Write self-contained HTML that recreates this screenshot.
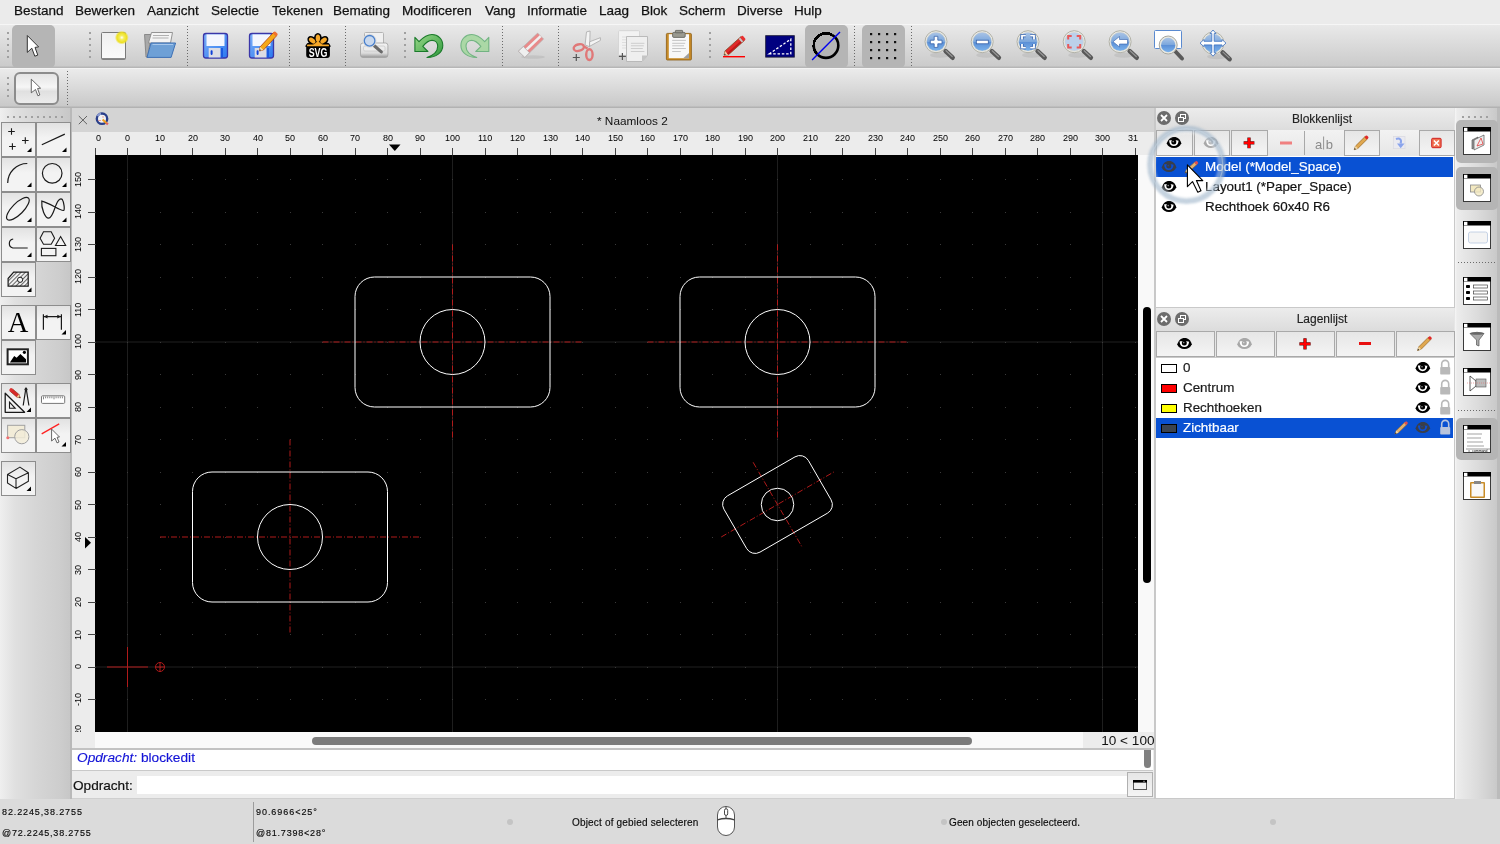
<!DOCTYPE html><html><head><meta charset="utf-8"><style>
*{margin:0;padding:0;box-sizing:border-box}
html,body{width:1500px;height:844px;overflow:hidden;background:#ececec;font-family:"Liberation Sans",sans-serif;color:#1b1b1b;position:relative}
.a{position:absolute}
div,span,svg{will-change:transform}
svg{position:absolute;overflow:visible}
.menu{left:0;top:0;width:1500px;height:24px;background:#ebebeb}
.menu span{position:absolute;top:3px;font-size:13.5px;line-height:16px;color:#111;-webkit-text-stroke:0.25px #111}
.tb1{left:0;top:24px;width:1500px;height:44px;background:linear-gradient(#f6f6f6 0,#f6f6f6 1px,#e9e9e9 1px,#cbcbcb 42px,#b6b6b6 43px,#b6b6b6 44px)}
.tb2{left:0;top:68px;width:1500px;height:40px;background:linear-gradient(#f3f3f3 0,#f3f3f3 1px,#ebebeb 1px,#c9c9c9 38px,#b2b2b2 39px,#b2b2b2 40px)}
.handle{position:absolute;width:2px;background:radial-gradient(circle,#a0a0a0 0.9px,transparent 1.2px) 0 0/2px 6px}
.hhandle{position:absolute;height:2px;background:radial-gradient(circle,#a0a0a0 0.9px,transparent 1.2px) 0 0/6px 2px}
.vsep{position:absolute;width:1px;background:linear-gradient(#6a6a6a 50%,transparent 50%) 0 0/1px 3px}
.hsep{position:absolute;height:1px;background:linear-gradient(90deg,#6a6a6a 50%,transparent 50%) 0 0/3px 1px}
.act{position:absolute;background:#b5b5b5;border-radius:5px}
.ltb{left:0;top:108px;width:72px;height:691px;background:linear-gradient(90deg,#efefef 0,#e0e0e0 15px,#d6d6d6 35px,#cdcdcd 60px,#c7c7c7 70px,#b9b9b9 70px,#b9b9b9 72px)}
.lbtn{position:absolute;width:35px;height:35px;border:1px solid #8d8d8d;background:linear-gradient(#e2e2e2,#f3f3f3 45%,#f3f3f3)}
.rtb{left:1455px;top:108px;width:45px;height:691px;background:linear-gradient(90deg,#f6f6f6 0,#ececec 2px,#dcdcdc 22px,#c9c9c9 42px,#bbbbbb 42px,#bbbbbb 45px)}
.status{left:0;top:799px;width:1500px;height:45px;background:#dbdbdb}
.st{position:absolute;font-size:10px;letter-spacing:0.3px;color:#0a0a0a;-webkit-text-stroke:0.15px #0a0a0a;line-height:12px;white-space:nowrap}
.mdi{left:72px;top:108px;width:1083px;height:691px;background:#ececec;border-bottom:1px solid #cfcfcf}
.tabbar{left:72px;top:108px;width:1083px;height:24px;background:#d4d4d4}
.ruler{background:#ececec}
.rl{position:absolute;font-size:9px;line-height:10px;color:#000;white-space:nowrap}
.canvas{left:95px;top:155px;width:1043px;height:577px;background:#000;overflow:hidden}
.dock{left:1155px;top:108px;width:300px;height:691px;background:#e6e6e6}
.dtitle{position:absolute;height:23px;background:linear-gradient(#ececec,#dcdcdc)}
.dtitle span{position:absolute;left:34px;right:0;text-align:center;top:4px;font-size:12px;color:#222;-webkit-text-stroke:0.15px #222}
.cbtn{position:absolute;width:14px;height:14px;border-radius:50%;background:#6c6c6c}
.dbtn{position:absolute;border:1px solid #a9a9a9;background:linear-gradient(#e6e6e6,#f4f4f4)}
.list{position:absolute;background:#fff;border:1px solid #c9c9c9}
.row{position:absolute;left:0;right:0;height:20px;font-size:13.4px;line-height:20px;color:#111;white-space:nowrap;-webkit-text-stroke:0.2px currentColor}
.sel{background:#0951d3;color:#fff}
</style></head><body><div class="a menu"><span style="left:14px">Bestand</span><span style="left:75.3px">Bewerken</span><span style="left:146.7px">Aanzicht</span><span style="left:211.3px">Selectie</span><span style="left:271.7px">Tekenen</span><span style="left:333px">Bemating</span><span style="left:402.3px">Modificeren</span><span style="left:485px">Vang</span><span style="left:526.7px">Informatie</span><span style="left:599px">Laag</span><span style="left:641px">Blok</span><span style="left:679.3px">Scherm</span><span style="left:737.3px">Diverse</span><span style="left:794px">Hulp</span></div><div class="a tb1"></div><div class="a tb2"></div><div class="handle" style="left:7px;top:30px;height:30px"></div><div class="handle" style="left:89px;top:30px;height:30px"></div><div class="handle" style="left:404px;top:30px;height:30px"></div><div class="handle" style="left:709px;top:30px;height:30px"></div><div class="vsep" style="left:187px;top:26px;height:40px"></div><div class="vsep" style="left:289px;top:26px;height:40px"></div><div class="vsep" style="left:345px;top:26px;height:40px"></div><div class="vsep" style="left:502px;top:26px;height:40px"></div><div class="vsep" style="left:558px;top:26px;height:40px"></div><div class="vsep" style="left:854px;top:26px;height:40px"></div><div class="vsep" style="left:911px;top:26px;height:40px"></div><div class="act" style="left:12px;top:25px;width:43px;height:43px"></div><div class="act" style="left:805px;top:25px;width:43px;height:43px"></div><div class="act" style="left:862px;top:25px;width:43px;height:43px"></div><div class="handle" style="left:7px;top:75px;height:24px"></div><div class="vsep" style="left:67px;top:71px;height:34px"></div><div class="a" style="left:14px;top:72px;width:45px;height:33px;border:2px solid #8c8c8c;border-radius:6px;background:linear-gradient(#e4e4e4,#f6f6f6 45%,#e0e0e0 60%,#ececec)"></div><div class="a ltb"></div><div class="hhandle" style="left:5px;top:116px;width:60px"></div><div class="lbtn" style="left:1px;top:122px"></div><div class="lbtn" style="left:36px;top:122px"></div><div class="lbtn" style="left:1px;top:157px"></div><div class="lbtn" style="left:36px;top:157px"></div><div class="lbtn" style="left:1px;top:192px"></div><div class="lbtn" style="left:36px;top:192px"></div><div class="lbtn" style="left:1px;top:227px"></div><div class="lbtn" style="left:36px;top:227px"></div><div class="lbtn" style="left:1px;top:262px"></div><div class="lbtn" style="left:1px;top:305px"></div><div class="lbtn" style="left:36px;top:305px"></div><div class="lbtn" style="left:1px;top:340px"></div><div class="lbtn" style="left:1px;top:383px"></div><div class="lbtn" style="left:36px;top:383px"></div><div class="lbtn" style="left:1px;top:418px"></div><div class="lbtn" style="left:36px;top:418px"></div><div class="lbtn" style="left:1px;top:461px"></div><div class="a mdi"></div><div class="a tabbar"></div><div class="a" style="left:597px;top:113.5px;font-size:11.8px;color:#111;white-space:nowrap">* Naamloos 2</div><svg style="left:78px;top:115px" width="11" height="11"><path d="M0.8 1L9 9.2M9 1L0.8 9.2" stroke="#555" stroke-width="0.9"/></svg><div class="a ruler" style="left:72px;top:132px;width:1083px;height:23px"></div><div class="a ruler" style="left:72px;top:132px;width:23px;height:616px"></div><svg style="left:0;top:0" width="1500" height="844"><line x1="95.5" y1="148" x2="95.5" y2="155" stroke="#444" stroke-width="1"/><line x1="127.5" y1="148" x2="127.5" y2="155" stroke="#444" stroke-width="1"/><line x1="160.5" y1="148" x2="160.5" y2="155" stroke="#444" stroke-width="1"/><line x1="192.5" y1="148" x2="192.5" y2="155" stroke="#444" stroke-width="1"/><line x1="225.5" y1="148" x2="225.5" y2="155" stroke="#444" stroke-width="1"/><line x1="257.5" y1="148" x2="257.5" y2="155" stroke="#444" stroke-width="1"/><line x1="290.5" y1="148" x2="290.5" y2="155" stroke="#444" stroke-width="1"/><line x1="322.5" y1="148" x2="322.5" y2="155" stroke="#444" stroke-width="1"/><line x1="355.5" y1="148" x2="355.5" y2="155" stroke="#444" stroke-width="1"/><line x1="387.5" y1="148" x2="387.5" y2="155" stroke="#444" stroke-width="1"/><line x1="420.5" y1="148" x2="420.5" y2="155" stroke="#444" stroke-width="1"/><line x1="452.5" y1="148" x2="452.5" y2="155" stroke="#444" stroke-width="1"/><line x1="485.5" y1="148" x2="485.5" y2="155" stroke="#444" stroke-width="1"/><line x1="517.5" y1="148" x2="517.5" y2="155" stroke="#444" stroke-width="1"/><line x1="550.5" y1="148" x2="550.5" y2="155" stroke="#444" stroke-width="1"/><line x1="582.5" y1="148" x2="582.5" y2="155" stroke="#444" stroke-width="1"/><line x1="615.5" y1="148" x2="615.5" y2="155" stroke="#444" stroke-width="1"/><line x1="647.5" y1="148" x2="647.5" y2="155" stroke="#444" stroke-width="1"/><line x1="680.5" y1="148" x2="680.5" y2="155" stroke="#444" stroke-width="1"/><line x1="712.5" y1="148" x2="712.5" y2="155" stroke="#444" stroke-width="1"/><line x1="745.5" y1="148" x2="745.5" y2="155" stroke="#444" stroke-width="1"/><line x1="777.5" y1="148" x2="777.5" y2="155" stroke="#444" stroke-width="1"/><line x1="810.5" y1="148" x2="810.5" y2="155" stroke="#444" stroke-width="1"/><line x1="842.5" y1="148" x2="842.5" y2="155" stroke="#444" stroke-width="1"/><line x1="875.5" y1="148" x2="875.5" y2="155" stroke="#444" stroke-width="1"/><line x1="907.5" y1="148" x2="907.5" y2="155" stroke="#444" stroke-width="1"/><line x1="940.5" y1="148" x2="940.5" y2="155" stroke="#444" stroke-width="1"/><line x1="972.5" y1="148" x2="972.5" y2="155" stroke="#444" stroke-width="1"/><line x1="1005.5" y1="148" x2="1005.5" y2="155" stroke="#444" stroke-width="1"/><line x1="1037.5" y1="148" x2="1037.5" y2="155" stroke="#444" stroke-width="1"/><line x1="1070.5" y1="148" x2="1070.5" y2="155" stroke="#444" stroke-width="1"/><line x1="1102.5" y1="148" x2="1102.5" y2="155" stroke="#444" stroke-width="1"/><line x1="1135.5" y1="148" x2="1135.5" y2="155" stroke="#444" stroke-width="1"/><line x1="88" y1="699.5" x2="95" y2="699.5" stroke="#444" stroke-width="1"/><line x1="88" y1="667.5" x2="95" y2="667.5" stroke="#444" stroke-width="1"/><line x1="88" y1="634.5" x2="95" y2="634.5" stroke="#444" stroke-width="1"/><line x1="88" y1="602.5" x2="95" y2="602.5" stroke="#444" stroke-width="1"/><line x1="88" y1="569.5" x2="95" y2="569.5" stroke="#444" stroke-width="1"/><line x1="88" y1="537.5" x2="95" y2="537.5" stroke="#444" stroke-width="1"/><line x1="88" y1="504.5" x2="95" y2="504.5" stroke="#444" stroke-width="1"/><line x1="88" y1="472.5" x2="95" y2="472.5" stroke="#444" stroke-width="1"/><line x1="88" y1="439.5" x2="95" y2="439.5" stroke="#444" stroke-width="1"/><line x1="88" y1="407.5" x2="95" y2="407.5" stroke="#444" stroke-width="1"/><line x1="88" y1="374.5" x2="95" y2="374.5" stroke="#444" stroke-width="1"/><line x1="88" y1="342.5" x2="95" y2="342.5" stroke="#444" stroke-width="1"/><line x1="88" y1="309.5" x2="95" y2="309.5" stroke="#444" stroke-width="1"/><line x1="88" y1="277.5" x2="95" y2="277.5" stroke="#444" stroke-width="1"/><line x1="88" y1="244.5" x2="95" y2="244.5" stroke="#444" stroke-width="1"/><line x1="88" y1="212.5" x2="95" y2="212.5" stroke="#444" stroke-width="1"/><line x1="88" y1="179.5" x2="95" y2="179.5" stroke="#444" stroke-width="1"/><path d="M389 144.5L400.5 144.5L394.8 151Z" fill="#000"/><path d="M85 537L91 542.7L85 548.4Z" fill="#000"/></svg><div class="a" style="left:95px;top:132px;width:1043px;height:23px;overflow:hidden"><div class="rl" style="left:1px;top:0.6px">0</div><div class="rl" style="left:30.0px;top:0.6px">0</div><div class="rl" style="left:60.0px;top:0.6px">10</div><div class="rl" style="left:92.5px;top:0.6px">20</div><div class="rl" style="left:125.0px;top:0.6px">30</div><div class="rl" style="left:157.5px;top:0.6px">40</div><div class="rl" style="left:190.0px;top:0.6px">50</div><div class="rl" style="left:222.5px;top:0.6px">60</div><div class="rl" style="left:255.0px;top:0.6px">70</div><div class="rl" style="left:287.5px;top:0.6px">80</div><div class="rl" style="left:320.0px;top:0.6px">90</div><div class="rl" style="left:350.0px;top:0.6px">100</div><div class="rl" style="left:382.5px;top:0.6px">110</div><div class="rl" style="left:415.0px;top:0.6px">120</div><div class="rl" style="left:447.5px;top:0.6px">130</div><div class="rl" style="left:480.0px;top:0.6px">140</div><div class="rl" style="left:512.5px;top:0.6px">150</div><div class="rl" style="left:545.0px;top:0.6px">160</div><div class="rl" style="left:577.5px;top:0.6px">170</div><div class="rl" style="left:610.0px;top:0.6px">180</div><div class="rl" style="left:642.5px;top:0.6px">190</div><div class="rl" style="left:675.0px;top:0.6px">200</div><div class="rl" style="left:707.5px;top:0.6px">210</div><div class="rl" style="left:740.0px;top:0.6px">220</div><div class="rl" style="left:772.5px;top:0.6px">230</div><div class="rl" style="left:805.0px;top:0.6px">240</div><div class="rl" style="left:837.5px;top:0.6px">250</div><div class="rl" style="left:870.0px;top:0.6px">260</div><div class="rl" style="left:902.5px;top:0.6px">270</div><div class="rl" style="left:935.0px;top:0.6px">280</div><div class="rl" style="left:967.5px;top:0.6px">290</div><div class="rl" style="left:1000.0px;top:0.6px">300</div><div class="rl" style="left:1032.5px;top:0.6px">310</div></div><div class="a" style="left:72px;top:155px;width:23px;height:577px;overflow:hidden"><div class="rl" style="left:1.0px;top:572.2px;width:10px;height:10px;transform:rotate(-90deg)"><span style="position:absolute;left:-1.5px;top:0">-20</span></div><div class="rl" style="left:1.0px;top:539.7px;width:10px;height:10px;transform:rotate(-90deg)"><span style="position:absolute;left:-1.5px;top:0">-10</span></div><div class="rl" style="left:1.0px;top:507.2px;width:10px;height:10px;transform:rotate(-90deg)"><span style="position:absolute;left:2.5px;top:0">0</span></div><div class="rl" style="left:1.0px;top:474.7px;width:10px;height:10px;transform:rotate(-90deg)"><span style="position:absolute;left:0.0px;top:0">10</span></div><div class="rl" style="left:1.0px;top:442.2px;width:10px;height:10px;transform:rotate(-90deg)"><span style="position:absolute;left:0.0px;top:0">20</span></div><div class="rl" style="left:1.0px;top:409.7px;width:10px;height:10px;transform:rotate(-90deg)"><span style="position:absolute;left:0.0px;top:0">30</span></div><div class="rl" style="left:1.0px;top:377.2px;width:10px;height:10px;transform:rotate(-90deg)"><span style="position:absolute;left:0.0px;top:0">40</span></div><div class="rl" style="left:1.0px;top:344.7px;width:10px;height:10px;transform:rotate(-90deg)"><span style="position:absolute;left:0.0px;top:0">50</span></div><div class="rl" style="left:1.0px;top:312.2px;width:10px;height:10px;transform:rotate(-90deg)"><span style="position:absolute;left:0.0px;top:0">60</span></div><div class="rl" style="left:1.0px;top:279.7px;width:10px;height:10px;transform:rotate(-90deg)"><span style="position:absolute;left:0.0px;top:0">70</span></div><div class="rl" style="left:1.0px;top:247.2px;width:10px;height:10px;transform:rotate(-90deg)"><span style="position:absolute;left:0.0px;top:0">80</span></div><div class="rl" style="left:1.0px;top:214.7px;width:10px;height:10px;transform:rotate(-90deg)"><span style="position:absolute;left:0.0px;top:0">90</span></div><div class="rl" style="left:1.0px;top:182.2px;width:10px;height:10px;transform:rotate(-90deg)"><span style="position:absolute;left:-2.5px;top:0">100</span></div><div class="rl" style="left:1.0px;top:149.7px;width:10px;height:10px;transform:rotate(-90deg)"><span style="position:absolute;left:-2.5px;top:0">110</span></div><div class="rl" style="left:1.0px;top:117.2px;width:10px;height:10px;transform:rotate(-90deg)"><span style="position:absolute;left:-2.5px;top:0">120</span></div><div class="rl" style="left:1.0px;top:84.7px;width:10px;height:10px;transform:rotate(-90deg)"><span style="position:absolute;left:-2.5px;top:0">130</span></div><div class="rl" style="left:1.0px;top:52.2px;width:10px;height:10px;transform:rotate(-90deg)"><span style="position:absolute;left:-2.5px;top:0">140</span></div><div class="rl" style="left:1.0px;top:19.7px;width:10px;height:10px;transform:rotate(-90deg)"><span style="position:absolute;left:-2.5px;top:0">150</span></div></div><div class="a canvas"><svg style="left:-95px;top:-155px" width="1500" height="844"><line x1="127.5" y1="155" x2="127.5" y2="732" stroke="#1e1e1e" stroke-width="1"/><line x1="452.5" y1="155" x2="452.5" y2="732" stroke="#1e1e1e" stroke-width="1"/><line x1="777.5" y1="155" x2="777.5" y2="732" stroke="#1e1e1e" stroke-width="1"/><line x1="1102.5" y1="155" x2="1102.5" y2="732" stroke="#1e1e1e" stroke-width="1"/><line x1="95" y1="667.0" x2="1138" y2="667.0" stroke="#212121" stroke-width="1"/><line x1="95" y1="342.0" x2="1138" y2="342.0" stroke="#212121" stroke-width="1"/><path d="M95 732h1v1h-1zM95 699h1v1h-1zM95 667h1v1h-1zM95 634h1v1h-1zM95 602h1v1h-1zM95 569h1v1h-1zM95 537h1v1h-1zM95 504h1v1h-1zM95 472h1v1h-1zM95 439h1v1h-1zM95 407h1v1h-1zM95 374h1v1h-1zM95 342h1v1h-1zM95 309h1v1h-1zM95 277h1v1h-1zM95 244h1v1h-1zM95 212h1v1h-1zM95 179h1v1h-1zM127 732h1v1h-1zM127 699h1v1h-1zM127 667h1v1h-1zM127 634h1v1h-1zM127 602h1v1h-1zM127 569h1v1h-1zM127 537h1v1h-1zM127 504h1v1h-1zM127 472h1v1h-1zM127 439h1v1h-1zM127 407h1v1h-1zM127 374h1v1h-1zM127 342h1v1h-1zM127 309h1v1h-1zM127 277h1v1h-1zM127 244h1v1h-1zM127 212h1v1h-1zM127 179h1v1h-1zM160 732h1v1h-1zM160 699h1v1h-1zM160 667h1v1h-1zM160 634h1v1h-1zM160 602h1v1h-1zM160 569h1v1h-1zM160 537h1v1h-1zM160 504h1v1h-1zM160 472h1v1h-1zM160 439h1v1h-1zM160 407h1v1h-1zM160 374h1v1h-1zM160 342h1v1h-1zM160 309h1v1h-1zM160 277h1v1h-1zM160 244h1v1h-1zM160 212h1v1h-1zM160 179h1v1h-1zM192 732h1v1h-1zM192 699h1v1h-1zM192 667h1v1h-1zM192 634h1v1h-1zM192 602h1v1h-1zM192 569h1v1h-1zM192 537h1v1h-1zM192 504h1v1h-1zM192 472h1v1h-1zM192 439h1v1h-1zM192 407h1v1h-1zM192 374h1v1h-1zM192 342h1v1h-1zM192 309h1v1h-1zM192 277h1v1h-1zM192 244h1v1h-1zM192 212h1v1h-1zM192 179h1v1h-1zM225 732h1v1h-1zM225 699h1v1h-1zM225 667h1v1h-1zM225 634h1v1h-1zM225 602h1v1h-1zM225 569h1v1h-1zM225 537h1v1h-1zM225 504h1v1h-1zM225 472h1v1h-1zM225 439h1v1h-1zM225 407h1v1h-1zM225 374h1v1h-1zM225 342h1v1h-1zM225 309h1v1h-1zM225 277h1v1h-1zM225 244h1v1h-1zM225 212h1v1h-1zM225 179h1v1h-1zM257 732h1v1h-1zM257 699h1v1h-1zM257 667h1v1h-1zM257 634h1v1h-1zM257 602h1v1h-1zM257 569h1v1h-1zM257 537h1v1h-1zM257 504h1v1h-1zM257 472h1v1h-1zM257 439h1v1h-1zM257 407h1v1h-1zM257 374h1v1h-1zM257 342h1v1h-1zM257 309h1v1h-1zM257 277h1v1h-1zM257 244h1v1h-1zM257 212h1v1h-1zM257 179h1v1h-1zM290 732h1v1h-1zM290 699h1v1h-1zM290 667h1v1h-1zM290 634h1v1h-1zM290 602h1v1h-1zM290 569h1v1h-1zM290 537h1v1h-1zM290 504h1v1h-1zM290 472h1v1h-1zM290 439h1v1h-1zM290 407h1v1h-1zM290 374h1v1h-1zM290 342h1v1h-1zM290 309h1v1h-1zM290 277h1v1h-1zM290 244h1v1h-1zM290 212h1v1h-1zM290 179h1v1h-1zM322 732h1v1h-1zM322 699h1v1h-1zM322 667h1v1h-1zM322 634h1v1h-1zM322 602h1v1h-1zM322 569h1v1h-1zM322 537h1v1h-1zM322 504h1v1h-1zM322 472h1v1h-1zM322 439h1v1h-1zM322 407h1v1h-1zM322 374h1v1h-1zM322 342h1v1h-1zM322 309h1v1h-1zM322 277h1v1h-1zM322 244h1v1h-1zM322 212h1v1h-1zM322 179h1v1h-1zM355 732h1v1h-1zM355 699h1v1h-1zM355 667h1v1h-1zM355 634h1v1h-1zM355 602h1v1h-1zM355 569h1v1h-1zM355 537h1v1h-1zM355 504h1v1h-1zM355 472h1v1h-1zM355 439h1v1h-1zM355 407h1v1h-1zM355 374h1v1h-1zM355 342h1v1h-1zM355 309h1v1h-1zM355 277h1v1h-1zM355 244h1v1h-1zM355 212h1v1h-1zM355 179h1v1h-1zM387 732h1v1h-1zM387 699h1v1h-1zM387 667h1v1h-1zM387 634h1v1h-1zM387 602h1v1h-1zM387 569h1v1h-1zM387 537h1v1h-1zM387 504h1v1h-1zM387 472h1v1h-1zM387 439h1v1h-1zM387 407h1v1h-1zM387 374h1v1h-1zM387 342h1v1h-1zM387 309h1v1h-1zM387 277h1v1h-1zM387 244h1v1h-1zM387 212h1v1h-1zM387 179h1v1h-1zM420 732h1v1h-1zM420 699h1v1h-1zM420 667h1v1h-1zM420 634h1v1h-1zM420 602h1v1h-1zM420 569h1v1h-1zM420 537h1v1h-1zM420 504h1v1h-1zM420 472h1v1h-1zM420 439h1v1h-1zM420 407h1v1h-1zM420 374h1v1h-1zM420 342h1v1h-1zM420 309h1v1h-1zM420 277h1v1h-1zM420 244h1v1h-1zM420 212h1v1h-1zM420 179h1v1h-1zM452 732h1v1h-1zM452 699h1v1h-1zM452 667h1v1h-1zM452 634h1v1h-1zM452 602h1v1h-1zM452 569h1v1h-1zM452 537h1v1h-1zM452 504h1v1h-1zM452 472h1v1h-1zM452 439h1v1h-1zM452 407h1v1h-1zM452 374h1v1h-1zM452 342h1v1h-1zM452 309h1v1h-1zM452 277h1v1h-1zM452 244h1v1h-1zM452 212h1v1h-1zM452 179h1v1h-1zM485 732h1v1h-1zM485 699h1v1h-1zM485 667h1v1h-1zM485 634h1v1h-1zM485 602h1v1h-1zM485 569h1v1h-1zM485 537h1v1h-1zM485 504h1v1h-1zM485 472h1v1h-1zM485 439h1v1h-1zM485 407h1v1h-1zM485 374h1v1h-1zM485 342h1v1h-1zM485 309h1v1h-1zM485 277h1v1h-1zM485 244h1v1h-1zM485 212h1v1h-1zM485 179h1v1h-1zM517 732h1v1h-1zM517 699h1v1h-1zM517 667h1v1h-1zM517 634h1v1h-1zM517 602h1v1h-1zM517 569h1v1h-1zM517 537h1v1h-1zM517 504h1v1h-1zM517 472h1v1h-1zM517 439h1v1h-1zM517 407h1v1h-1zM517 374h1v1h-1zM517 342h1v1h-1zM517 309h1v1h-1zM517 277h1v1h-1zM517 244h1v1h-1zM517 212h1v1h-1zM517 179h1v1h-1zM550 732h1v1h-1zM550 699h1v1h-1zM550 667h1v1h-1zM550 634h1v1h-1zM550 602h1v1h-1zM550 569h1v1h-1zM550 537h1v1h-1zM550 504h1v1h-1zM550 472h1v1h-1zM550 439h1v1h-1zM550 407h1v1h-1zM550 374h1v1h-1zM550 342h1v1h-1zM550 309h1v1h-1zM550 277h1v1h-1zM550 244h1v1h-1zM550 212h1v1h-1zM550 179h1v1h-1zM582 732h1v1h-1zM582 699h1v1h-1zM582 667h1v1h-1zM582 634h1v1h-1zM582 602h1v1h-1zM582 569h1v1h-1zM582 537h1v1h-1zM582 504h1v1h-1zM582 472h1v1h-1zM582 439h1v1h-1zM582 407h1v1h-1zM582 374h1v1h-1zM582 342h1v1h-1zM582 309h1v1h-1zM582 277h1v1h-1zM582 244h1v1h-1zM582 212h1v1h-1zM582 179h1v1h-1zM615 732h1v1h-1zM615 699h1v1h-1zM615 667h1v1h-1zM615 634h1v1h-1zM615 602h1v1h-1zM615 569h1v1h-1zM615 537h1v1h-1zM615 504h1v1h-1zM615 472h1v1h-1zM615 439h1v1h-1zM615 407h1v1h-1zM615 374h1v1h-1zM615 342h1v1h-1zM615 309h1v1h-1zM615 277h1v1h-1zM615 244h1v1h-1zM615 212h1v1h-1zM615 179h1v1h-1zM647 732h1v1h-1zM647 699h1v1h-1zM647 667h1v1h-1zM647 634h1v1h-1zM647 602h1v1h-1zM647 569h1v1h-1zM647 537h1v1h-1zM647 504h1v1h-1zM647 472h1v1h-1zM647 439h1v1h-1zM647 407h1v1h-1zM647 374h1v1h-1zM647 342h1v1h-1zM647 309h1v1h-1zM647 277h1v1h-1zM647 244h1v1h-1zM647 212h1v1h-1zM647 179h1v1h-1zM680 732h1v1h-1zM680 699h1v1h-1zM680 667h1v1h-1zM680 634h1v1h-1zM680 602h1v1h-1zM680 569h1v1h-1zM680 537h1v1h-1zM680 504h1v1h-1zM680 472h1v1h-1zM680 439h1v1h-1zM680 407h1v1h-1zM680 374h1v1h-1zM680 342h1v1h-1zM680 309h1v1h-1zM680 277h1v1h-1zM680 244h1v1h-1zM680 212h1v1h-1zM680 179h1v1h-1zM712 732h1v1h-1zM712 699h1v1h-1zM712 667h1v1h-1zM712 634h1v1h-1zM712 602h1v1h-1zM712 569h1v1h-1zM712 537h1v1h-1zM712 504h1v1h-1zM712 472h1v1h-1zM712 439h1v1h-1zM712 407h1v1h-1zM712 374h1v1h-1zM712 342h1v1h-1zM712 309h1v1h-1zM712 277h1v1h-1zM712 244h1v1h-1zM712 212h1v1h-1zM712 179h1v1h-1zM745 732h1v1h-1zM745 699h1v1h-1zM745 667h1v1h-1zM745 634h1v1h-1zM745 602h1v1h-1zM745 569h1v1h-1zM745 537h1v1h-1zM745 504h1v1h-1zM745 472h1v1h-1zM745 439h1v1h-1zM745 407h1v1h-1zM745 374h1v1h-1zM745 342h1v1h-1zM745 309h1v1h-1zM745 277h1v1h-1zM745 244h1v1h-1zM745 212h1v1h-1zM745 179h1v1h-1zM777 732h1v1h-1zM777 699h1v1h-1zM777 667h1v1h-1zM777 634h1v1h-1zM777 602h1v1h-1zM777 569h1v1h-1zM777 537h1v1h-1zM777 504h1v1h-1zM777 472h1v1h-1zM777 439h1v1h-1zM777 407h1v1h-1zM777 374h1v1h-1zM777 342h1v1h-1zM777 309h1v1h-1zM777 277h1v1h-1zM777 244h1v1h-1zM777 212h1v1h-1zM777 179h1v1h-1zM810 732h1v1h-1zM810 699h1v1h-1zM810 667h1v1h-1zM810 634h1v1h-1zM810 602h1v1h-1zM810 569h1v1h-1zM810 537h1v1h-1zM810 504h1v1h-1zM810 472h1v1h-1zM810 439h1v1h-1zM810 407h1v1h-1zM810 374h1v1h-1zM810 342h1v1h-1zM810 309h1v1h-1zM810 277h1v1h-1zM810 244h1v1h-1zM810 212h1v1h-1zM810 179h1v1h-1zM842 732h1v1h-1zM842 699h1v1h-1zM842 667h1v1h-1zM842 634h1v1h-1zM842 602h1v1h-1zM842 569h1v1h-1zM842 537h1v1h-1zM842 504h1v1h-1zM842 472h1v1h-1zM842 439h1v1h-1zM842 407h1v1h-1zM842 374h1v1h-1zM842 342h1v1h-1zM842 309h1v1h-1zM842 277h1v1h-1zM842 244h1v1h-1zM842 212h1v1h-1zM842 179h1v1h-1zM875 732h1v1h-1zM875 699h1v1h-1zM875 667h1v1h-1zM875 634h1v1h-1zM875 602h1v1h-1zM875 569h1v1h-1zM875 537h1v1h-1zM875 504h1v1h-1zM875 472h1v1h-1zM875 439h1v1h-1zM875 407h1v1h-1zM875 374h1v1h-1zM875 342h1v1h-1zM875 309h1v1h-1zM875 277h1v1h-1zM875 244h1v1h-1zM875 212h1v1h-1zM875 179h1v1h-1zM907 732h1v1h-1zM907 699h1v1h-1zM907 667h1v1h-1zM907 634h1v1h-1zM907 602h1v1h-1zM907 569h1v1h-1zM907 537h1v1h-1zM907 504h1v1h-1zM907 472h1v1h-1zM907 439h1v1h-1zM907 407h1v1h-1zM907 374h1v1h-1zM907 342h1v1h-1zM907 309h1v1h-1zM907 277h1v1h-1zM907 244h1v1h-1zM907 212h1v1h-1zM907 179h1v1h-1zM940 732h1v1h-1zM940 699h1v1h-1zM940 667h1v1h-1zM940 634h1v1h-1zM940 602h1v1h-1zM940 569h1v1h-1zM940 537h1v1h-1zM940 504h1v1h-1zM940 472h1v1h-1zM940 439h1v1h-1zM940 407h1v1h-1zM940 374h1v1h-1zM940 342h1v1h-1zM940 309h1v1h-1zM940 277h1v1h-1zM940 244h1v1h-1zM940 212h1v1h-1zM940 179h1v1h-1zM972 732h1v1h-1zM972 699h1v1h-1zM972 667h1v1h-1zM972 634h1v1h-1zM972 602h1v1h-1zM972 569h1v1h-1zM972 537h1v1h-1zM972 504h1v1h-1zM972 472h1v1h-1zM972 439h1v1h-1zM972 407h1v1h-1zM972 374h1v1h-1zM972 342h1v1h-1zM972 309h1v1h-1zM972 277h1v1h-1zM972 244h1v1h-1zM972 212h1v1h-1zM972 179h1v1h-1zM1005 732h1v1h-1zM1005 699h1v1h-1zM1005 667h1v1h-1zM1005 634h1v1h-1zM1005 602h1v1h-1zM1005 569h1v1h-1zM1005 537h1v1h-1zM1005 504h1v1h-1zM1005 472h1v1h-1zM1005 439h1v1h-1zM1005 407h1v1h-1zM1005 374h1v1h-1zM1005 342h1v1h-1zM1005 309h1v1h-1zM1005 277h1v1h-1zM1005 244h1v1h-1zM1005 212h1v1h-1zM1005 179h1v1h-1zM1037 732h1v1h-1zM1037 699h1v1h-1zM1037 667h1v1h-1zM1037 634h1v1h-1zM1037 602h1v1h-1zM1037 569h1v1h-1zM1037 537h1v1h-1zM1037 504h1v1h-1zM1037 472h1v1h-1zM1037 439h1v1h-1zM1037 407h1v1h-1zM1037 374h1v1h-1zM1037 342h1v1h-1zM1037 309h1v1h-1zM1037 277h1v1h-1zM1037 244h1v1h-1zM1037 212h1v1h-1zM1037 179h1v1h-1zM1070 732h1v1h-1zM1070 699h1v1h-1zM1070 667h1v1h-1zM1070 634h1v1h-1zM1070 602h1v1h-1zM1070 569h1v1h-1zM1070 537h1v1h-1zM1070 504h1v1h-1zM1070 472h1v1h-1zM1070 439h1v1h-1zM1070 407h1v1h-1zM1070 374h1v1h-1zM1070 342h1v1h-1zM1070 309h1v1h-1zM1070 277h1v1h-1zM1070 244h1v1h-1zM1070 212h1v1h-1zM1070 179h1v1h-1zM1102 732h1v1h-1zM1102 699h1v1h-1zM1102 667h1v1h-1zM1102 634h1v1h-1zM1102 602h1v1h-1zM1102 569h1v1h-1zM1102 537h1v1h-1zM1102 504h1v1h-1zM1102 472h1v1h-1zM1102 439h1v1h-1zM1102 407h1v1h-1zM1102 374h1v1h-1zM1102 342h1v1h-1zM1102 309h1v1h-1zM1102 277h1v1h-1zM1102 244h1v1h-1zM1102 212h1v1h-1zM1102 179h1v1h-1zM1135 732h1v1h-1zM1135 699h1v1h-1zM1135 667h1v1h-1zM1135 634h1v1h-1zM1135 602h1v1h-1zM1135 569h1v1h-1zM1135 537h1v1h-1zM1135 504h1v1h-1zM1135 472h1v1h-1zM1135 439h1v1h-1zM1135 407h1v1h-1zM1135 374h1v1h-1zM1135 342h1v1h-1zM1135 309h1v1h-1zM1135 277h1v1h-1zM1135 244h1v1h-1zM1135 212h1v1h-1zM1135 179h1v1h-1z" fill="#3a3a3a"/><path d="M322.50 342.00L582.50 342.00M452.50 244.50L452.50 439.50" stroke="#b01a1a" stroke-width="1" stroke-dasharray="6 2 1 2" fill="none"/><path d="M647.50 342.00L907.50 342.00M777.50 244.50L777.50 439.50" stroke="#b01a1a" stroke-width="1" stroke-dasharray="6 2 1 2" fill="none"/><path d="M160.00 537.00L420.00 537.00M290.00 439.50L290.00 634.50" stroke="#b01a1a" stroke-width="1" stroke-dasharray="6 2 1 2" fill="none"/><path d="M721.21 537.00L833.79 472.00M753.12 462.28L801.88 546.72" stroke="#b01a1a" stroke-width="1" stroke-dasharray="6 2 1 2" fill="none"/><path d="M374.50 407.00L530.50 407.00A19.5 19.5 0 0 0 550.00 387.50L550.00 296.50A19.5 19.5 0 0 0 530.50 277.00L374.50 277.00A19.5 19.5 0 0 0 355.00 296.50L355.00 387.50A19.5 19.5 0 0 0 374.50 407.00Z" stroke="#fff" stroke-width="1" fill="none"/><circle cx="452.5" cy="342.0" r="32.5" stroke="#fff" stroke-width="1" fill="none"/><path d="M699.50 407.00L855.50 407.00A19.5 19.5 0 0 0 875.00 387.50L875.00 296.50A19.5 19.5 0 0 0 855.50 277.00L699.50 277.00A19.5 19.5 0 0 0 680.00 296.50L680.00 387.50A19.5 19.5 0 0 0 699.50 407.00Z" stroke="#fff" stroke-width="1" fill="none"/><circle cx="777.5" cy="342.0" r="32.5" stroke="#fff" stroke-width="1" fill="none"/><path d="M212.00 602.00L368.00 602.00A19.5 19.5 0 0 0 387.50 582.50L387.50 491.50A19.5 19.5 0 0 0 368.00 472.00L212.00 472.00A19.5 19.5 0 0 0 192.50 491.50L192.50 582.50A19.5 19.5 0 0 0 212.00 602.00Z" stroke="#fff" stroke-width="1" fill="none"/><circle cx="290.0" cy="537.0" r="32.5" stroke="#fff" stroke-width="1" fill="none"/><path d="M759.98 552.15L827.52 513.15A9.75 9.75 0 0 0 831.09 499.83L808.34 460.42A9.75 9.75 0 0 0 795.02 456.85L727.48 495.85A9.75 9.75 0 0 0 723.91 509.17L746.66 548.58A9.75 9.75 0 0 0 759.98 552.15Z" stroke="#fff" stroke-width="1" fill="none"/><circle cx="777.5" cy="504.5" r="16.25" stroke="#fff" stroke-width="1" fill="none"/><path d="M107 667H148M127.5 647V687" stroke="#b01a1a" stroke-width="1"/><circle cx="160" cy="667" r="4.5" stroke="#b01a1a" stroke-width="1" fill="none"/><path d="M160 662V672M155.5 667H164.5" stroke="#b01a1a" stroke-width="1"/></svg></div><div class="a" style="left:1138px;top:155px;width:17px;height:593px;background:#f9f9f9"></div><div class="a" style="left:1143px;top:307px;width:8px;height:276px;border-radius:4px;background:#000"></div><div class="a" style="left:95px;top:732px;width:988px;height:16px;background:#f9f9f9"></div><div class="a" style="left:312px;top:737px;width:660px;height:8px;border-radius:4px;background:#7b7b7b"></div><div class="a" style="left:1083px;top:732px;width:72px;height:16px;background:#ececec"></div><div class="a" style="left:1074px;top:732.5px;width:80.5px;text-align:right;font-size:13.6px;line-height:16px;color:#111;white-space:nowrap">10 &lt; 100</div><div class="a" style="left:72px;top:748px;width:1083px;height:50px;background:#ececec;border-top:2px solid #c2c2c2"></div><div class="a" style="left:72px;top:750px;width:1081px;height:21px;background:#fff;border-bottom:1px solid #c9c9c9"></div><div class="a" style="left:77px;top:750px;font-size:13.7px;line-height:16px;color:#1212d6;white-space:nowrap;-webkit-text-stroke:0.15px #1212d6"><i>Opdracht:</i> blockedit</div><div class="a" style="left:1144px;top:750px;width:7px;height:18px;border-radius:0 0 3.5px 3.5px;background:#808080"></div><div class="a" style="left:73px;top:778px;font-size:13.6px;line-height:16px;color:#111;white-space:nowrap;-webkit-text-stroke:0.2px #111">Opdracht:</div><div class="a" style="left:137px;top:776px;width:990px;height:18px;background:#fff"></div><div class="a" style="left:1127px;top:772px;width:26px;height:25px;border:1px solid #b0b0b0;background:linear-gradient(#e6e6e6,#f4f4f4)"></div><svg style="left:1133px;top:780px" width="14" height="10"><rect x="0.5" y="0.5" width="13" height="9" fill="#f0f0f0" stroke="#555"/><rect x="0" y="0" width="14" height="2.6" fill="#000"/><rect x="10.5" y="0.8" width="1" height="1" fill="#fff"/></svg><div class="a dock"></div><div class="a" style="left:1154px;top:108px;width:2px;height:691px;background:#c8c8c8"></div><div class="dtitle" style="left:1156px;top:108px;width:298px"><span>Blokkenlijst</span></div><div class="list" style="left:1155px;top:155px;width:300px;height:153px"></div><div class="dtitle" style="left:1156px;top:308px;width:298px"><span>Lagenlijst</span></div><div class="list" style="left:1155px;top:357px;width:300px;height:442px"></div><div class="cbtn" style="left:1157px;top:111px"></div><svg style="left:1160px;top:114px" width="8" height="8"><path d="M1 1L7 7M7 1L1 7" stroke="#fff" stroke-width="1.8"/></svg><div class="cbtn" style="left:1175px;top:111px"></div><svg style="left:1177px;top:113px" width="10" height="10"><rect x="3.5" y="1.5" width="5" height="4" fill="none" stroke="#fff" stroke-width="1"/><rect x="1.5" y="4.5" width="5" height="4" fill="#6c6c6c" stroke="#fff" stroke-width="1"/></svg><div class="cbtn" style="left:1157px;top:312px"></div><svg style="left:1160px;top:315px" width="8" height="8"><path d="M1 1L7 7M7 1L1 7" stroke="#fff" stroke-width="1.8"/></svg><div class="cbtn" style="left:1175px;top:312px"></div><svg style="left:1177px;top:314px" width="10" height="10"><rect x="3.5" y="1.5" width="5" height="4" fill="none" stroke="#fff" stroke-width="1"/><rect x="1.5" y="4.5" width="5" height="4" fill="#6c6c6c" stroke="#fff" stroke-width="1"/></svg><div class="dbtn" style="left:1156px;top:130px;width:37px;height:26px"></div><div class="dbtn" style="left:1194px;top:130px;width:36px;height:26px"></div><div class="dbtn" style="left:1231px;top:130px;width:37px;height:26px"></div><div class="a" style="left:1268px;top:130px;width:38px;height:26px;background:linear-gradient(#f2f2f2,#e6e6e6)"></div><div class="a" style="left:1305px;top:130px;width:39px;height:26px;background:linear-gradient(#f2f2f2,#e6e6e6)"></div><div class="dbtn" style="left:1344px;top:130px;width:36px;height:26px"></div><div class="a" style="left:1380px;top:130px;width:39px;height:26px;background:linear-gradient(#f2f2f2,#e6e6e6)"></div><div class="dbtn" style="left:1419px;top:130px;width:36px;height:26px"></div><div class="a" style="left:1304px;top:131px;width:1px;height:24px;background:#a8a8a8"></div><div class="dbtn" style="left:1156px;top:331px;width:59px;height:26px"></div><div class="dbtn" style="left:1216px;top:331px;width:59px;height:26px"></div><div class="dbtn" style="left:1276px;top:331px;width:59px;height:26px"></div><div class="dbtn" style="left:1336px;top:331px;width:59px;height:26px"></div><div class="dbtn" style="left:1396px;top:331px;width:59px;height:26px"></div><div class="row sel a" style="left:1156px;top:157px;width:297px"></div><div class="a row" style="left:1205px;top:157px;color:#fff">Model (*Model_Space)</div><div class="a row" style="left:1205px;top:177px">Layout1 (*Paper_Space)</div><div class="a row" style="left:1205px;top:197px">Rechthoek 60x40 R6</div><div class="row sel a" style="left:1156px;top:418px;width:297px"></div><div class="a" style="left:1161px;top:364px;width:16px;height:9px;background:#fff;border:1px solid #000"></div><div class="a row" style="left:1183px;top:358px;color:#1b1b1b">0</div><div class="a" style="left:1161px;top:384px;width:16px;height:9px;background:#f00;border:1px solid #000"></div><div class="a row" style="left:1183px;top:378px;color:#1b1b1b">Centrum</div><div class="a" style="left:1161px;top:404px;width:16px;height:9px;background:#ff0;border:1px solid #000"></div><div class="a row" style="left:1183px;top:398px;color:#1b1b1b">Rechthoeken</div><div class="a" style="left:1161px;top:424px;width:16px;height:9px;background:#3b4350;border:1px solid #000"></div><div class="a row" style="left:1183px;top:418px;color:#fff">Zichtbaar</div><div class="a rtb"></div><div class="hhandle" style="left:1460px;top:116px;width:30px"></div><div class="act" style="left:1456px;top:120px;width:42px;height:43px"></div><div class="act" style="left:1456px;top:167px;width:42px;height:43px"></div><div class="act" style="left:1456px;top:418px;width:42px;height:42px"></div><div class="hsep" style="left:1458px;top:262px;width:38px"></div><div class="hsep" style="left:1458px;top:410px;width:38px"></div><svg style="left:1463px;top:127px" width="28" height="28"><rect x="0.5" y="0.5" width="27" height="27" fill="#fff" stroke="#3a3a3a"/><rect x="0" y="0" width="28" height="4.5" fill="#000"/><rect x="1" y="0.8" width="3.4" height="3.4" fill="#fff"/></svg><svg style="left:1463px;top:174px" width="28" height="28"><rect x="0.5" y="0.5" width="27" height="27" fill="#fff" stroke="#3a3a3a"/><rect x="0" y="0" width="28" height="4.5" fill="#000"/><rect x="1" y="0.8" width="3.4" height="3.4" fill="#fff"/></svg><svg style="left:1463px;top:221px" width="28" height="28"><rect x="0.5" y="0.5" width="27" height="27" fill="#fff" stroke="#3a3a3a"/><rect x="0" y="0" width="28" height="4.5" fill="#000"/><rect x="1" y="0.8" width="3.4" height="3.4" fill="#fff"/></svg><svg style="left:1463px;top:277px" width="28" height="28"><rect x="0.5" y="0.5" width="27" height="27" fill="#fff" stroke="#3a3a3a"/><rect x="0" y="0" width="28" height="4.5" fill="#000"/><rect x="1" y="0.8" width="3.4" height="3.4" fill="#fff"/></svg><svg style="left:1463px;top:323px" width="28" height="28"><rect x="0.5" y="0.5" width="27" height="27" fill="#fff" stroke="#3a3a3a"/><rect x="0" y="0" width="28" height="4.5" fill="#000"/><rect x="1" y="0.8" width="3.4" height="3.4" fill="#fff"/></svg><svg style="left:1463px;top:368px" width="28" height="28"><rect x="0.5" y="0.5" width="27" height="27" fill="#fff" stroke="#3a3a3a"/><rect x="0" y="0" width="28" height="4.5" fill="#000"/><rect x="1" y="0.8" width="3.4" height="3.4" fill="#fff"/></svg><svg style="left:1463px;top:425px" width="28" height="28"><rect x="0.5" y="0.5" width="27" height="27" fill="#fff" stroke="#3a3a3a"/><rect x="0" y="0" width="28" height="4.5" fill="#000"/><rect x="1" y="0.8" width="3.4" height="3.4" fill="#fff"/></svg><svg style="left:1463px;top:472px" width="28" height="28"><rect x="0.5" y="0.5" width="27" height="27" fill="#fff" stroke="#3a3a3a"/><rect x="0" y="0" width="28" height="4.5" fill="#000"/><rect x="1" y="0.8" width="3.4" height="3.4" fill="#fff"/></svg><div class="a status"></div><div class="st" style="left:2px;top:806px;font-size:9px;letter-spacing:0.88px">82.2245,38.2755</div><div class="st" style="left:2px;top:827.3px;font-size:9px;letter-spacing:0.8px">@72.2245,38.2755</div><div class="a" style="left:253px;top:802px;width:1px;height:40px;background:#9c9c9c"></div><div class="st" style="left:256px;top:806px;font-size:9px;letter-spacing:0.95px">90.6966&lt;25°</div><div class="st" style="left:256px;top:827.3px;font-size:9px;letter-spacing:0.8px">@81.7398&lt;28°</div><div class="a" style="left:506.5px;top:819px;width:6px;height:6px;border-radius:50%;background:#c4c4c4"></div><div class="st" style="left:572px;top:817px;letter-spacing:0.18px">Object of gebied selecteren</div><div class="a" style="left:940.5px;top:819px;width:6px;height:6px;border-radius:50%;background:#c4c4c4"></div><div class="st" style="left:949px;top:817px;letter-spacing:0.12px">Geen objecten geselecteerd.</div><div class="a" style="left:1269.5px;top:819px;width:6px;height:6px;border-radius:50%;background:#c4c4c4"></div><svg style="left:0;top:0" width="1500" height="844"><defs><linearGradient id="gblue" x1="0" y1="0" x2="0" y2="1"><stop offset="0" stop-color="#aac4e6"/><stop offset="0.5" stop-color="#7aa6dc"/><stop offset="0.52" stop-color="#5b8fd6"/><stop offset="1" stop-color="#7ab2ec"/></linearGradient><linearGradient id="ggreen" x1="0" y1="0" x2="1" y2="1"><stop offset="0" stop-color="#9ad88a"/><stop offset="1" stop-color="#2f9a3c"/></linearGradient><linearGradient id="gfloppy" x1="0" y1="0" x2="1" y2="1"><stop offset="0" stop-color="#7fb0f8"/><stop offset="1" stop-color="#2a78f0"/></linearGradient><linearGradient id="gpaper" x1="0" y1="0" x2="0" y2="1"><stop offset="0" stop-color="#efefef"/><stop offset="1" stop-color="#fbfbfb"/></linearGradient><radialGradient id="gglow"><stop offset="0" stop-color="#fff"/><stop offset="0.3" stop-color="#f4ee60"/><stop offset="0.7" stop-color="#eee020"/><stop offset="1" stop-color="#eee020" stop-opacity="0"/></radialGradient><linearGradient id="gprinter" x1="0" y1="0" x2="0" y2="1"><stop offset="0" stop-color="#f4f4f4"/><stop offset="0.7" stop-color="#dcdcdc"/><stop offset="1" stop-color="#9a9a9a"/></linearGradient><pattern id="hatch" width="3" height="3" patternUnits="userSpaceOnUse" patternTransform="rotate(45)"><rect width="3" height="3" fill="#f0f0f0"/><rect width="1" height="3" fill="#666"/></pattern></defs><path d="M27.3 35.5L38.6 46.9L35 47.4L37.8 55.1L34.8 56.2L31.8 48.2L27.3 52.4Z" fill="#fff" stroke="#333" stroke-width="1" stroke-linejoin="round"/><rect x="101.5" y="32.5" width="24" height="27" rx="1" fill="url(#gpaper)" stroke="#7a7a7a" stroke-width="1"/><rect x="102" y="58" width="23" height="1.5" fill="#8a8a8a"/><circle cx="121.8" cy="37.6" r="7" fill="url(#gglow)"/><path d="M144.5 34.5H151.5L147.5 57H146Z" fill="#a8a8a8" stroke="#7a7a7a" stroke-width="0.8"/><path d="M151.5 32.5H172.5L170.5 43H148.5Z" fill="#f4f4f4" stroke="#8a8a8a" stroke-width="0.9"/><path d="M153 35.5H169M152.5 38H168.5" stroke="#b0b0b0" stroke-width="1"/><path d="M151 43H175.6L171.1 57.4H147Z" fill="#6ea0d6" stroke="#3e70b4" stroke-width="1" stroke-linejoin="round"/><path d="M152.5 44.5H173" stroke="#a8c8ec" stroke-width="1"/><rect x="203.5" y="33.5" width="24" height="24.5" rx="2.5" fill="url(#gfloppy)" stroke="#3a36a8" stroke-width="1.3"/><rect x="206.5" y="34.4" width="18" height="11.6" fill="#f4f6fe"/><rect x="208.7" y="48" width="12" height="9.5" fill="#dcdce4"/><rect x="220.7" y="48" width="2.3" height="9.5" fill="#1b5ae0"/><rect x="210.6" y="50.2" width="2" height="4.7" rx="0.8" fill="#1040d8"/><rect x="249.5" y="33.5" width="24" height="24.5" rx="2.5" fill="url(#gfloppy)" stroke="#3a36a8" stroke-width="1.3"/><rect x="252.5" y="34.4" width="18" height="11.6" fill="#f4f6fe"/><rect x="254.7" y="48" width="12" height="9.5" fill="#dcdce4"/><rect x="266.7" y="48" width="2.3" height="9.5" fill="#1b5ae0"/><rect x="256.6" y="50.2" width="2" height="4.7" rx="0.8" fill="#1040d8"/><g transform="translate(259.4 51) rotate(-47.11)"><path d="M0 0L3.5 -2.3H22.97779013443743V2.3H3.5Z" fill="#f5a818" stroke="#a02810" stroke-width="0.6"/><path d="M0 0L3.5 -2.3V2.3Z" fill="#f6dca0"/><path d="M0 0L1.6 -0.8V0.8Z" fill="#222"/><rect x="21.97779013443743" y="-2.3" width="3" height="4.6" rx="1" fill="#f07030"/></g><ellipse cx="317.9" cy="38.2" rx="3.9" ry="5.3" transform="rotate(0 317.9 38.2)" fill="#000"/><ellipse cx="312.2" cy="40.6" rx="3.9" ry="5.3" transform="rotate(-52 312.2 40.6)" fill="#000"/><ellipse cx="323.6" cy="40.6" rx="3.9" ry="5.3" transform="rotate(52 323.6 40.6)" fill="#000"/><rect x="306.2" y="42.7" width="23.7" height="15.2" rx="3" fill="#000"/><path d="M305.5 45.5Q309 41.5 313 43L317.9 44.5L322.8 43Q327 41.5 330.5 45.5V47H305.5Z" fill="#000"/><ellipse cx="317.9" cy="38.2" rx="2.2" ry="3.7" transform="rotate(0 317.9 38.2)" fill="#f6a828"/><ellipse cx="312.2" cy="40.6" rx="2.2" ry="3.7" transform="rotate(-52 312.2 40.6)" fill="#f6a828"/><ellipse cx="323.6" cy="40.6" rx="2.2" ry="3.7" transform="rotate(52 323.6 40.6)" fill="#f6a828"/><path d="M307.9 45.4H328.1" stroke="#f6a828" stroke-width="1.9" stroke-linecap="round"/><path d="M312.5 45.5L317.9 41L323.3 45.5Z" fill="#f6a828"/><text x="318" y="57" text-anchor="middle" font-family="Liberation Sans" font-weight="bold" font-size="13.5" fill="#fff" textLength="18.7" lengthAdjust="spacingAndGlyphs">SVG</text><rect x="364.5" y="32.5" width="19" height="13" rx="1" fill="#f0f0f0" stroke="#b4b4b4" stroke-width="1"/><path d="M366 43.2H386V56.5H362Z" fill="url(#gprinter)"/><rect x="360.5" y="43" width="27.4" height="14.4" rx="2.5" fill="url(#gprinter)" stroke="#a0a0a0" stroke-width="0.8"/><rect x="363.5" y="46" width="21.5" height="5" rx="1.5" fill="#ececec" stroke="#c0c0c0" stroke-width="0.6"/><path d="M374 45.5L381.3 51.9" stroke="#6a6a6a" stroke-width="3.2" stroke-linecap="round"/><circle cx="369.6" cy="40.8" r="6.4" fill="#f2f2f2" stroke="#d8d8d8" stroke-width="1"/><circle cx="369.6" cy="40.8" r="5.3" fill="#c8d8ee" stroke="#4a80cc" stroke-width="1.3"/><path transform="translate(410 28)" d="M4.9 9.4L9 13.6C13 9.5 17 6.5 22 6.5C28 6.5 32.8 11 32.8 17.5C32.8 24.5 26 29.5 17 29.4C23 27.5 27.7 23.5 27.7 18.3C27.7 14.5 25 12.4 22 12.4C18.5 12.4 15.5 15 12.8 18.3L17.9 23.5L4.9 23.5Z" fill="url(#ggreen)" stroke="#1a7a2a" stroke-width="1.1" stroke-linejoin="round"/><path transform="translate(903.7 28) scale(-1 1) translate(410 0)" d="M4.9 9.4L9 13.6C13 9.5 17 6.5 22 6.5C28 6.5 32.8 11 32.8 17.5C32.8 24.5 26 29.5 17 29.4C23 27.5 27.7 23.5 27.7 18.3C27.7 14.5 25 12.4 22 12.4C18.5 12.4 15.5 15 12.8 18.3L17.9 23.5L4.9 23.5Z" fill="#a6d8a0" stroke="#68b07a" stroke-width="1.1" stroke-linejoin="round" opacity="0.9"/><ellipse cx="533" cy="57" rx="12" ry="1.8" fill="#000" opacity="0.07"/><g transform="translate(512 28)"><path d="M25.6 5.1L31.6 11.1L12.8 29.4L6.4 23.2Z" fill="#e88a8a" stroke="#b0b0b0" stroke-width="0.6"/><path d="M28.6 8.1L9.6 26.3" stroke="#f0f0f0" stroke-width="2.6"/><path d="M11.3 18.5L17.5 24.7L12.8 29.4L6.4 23.2Z" fill="#efefef" stroke="#a8a8a8" stroke-width="0.7"/></g><g transform="translate(568 26)"><path d="M18.5 5.9L22.1 5L21.6 20.7L17.1 18.9Z" fill="#f4f4f4" stroke="#a0a0a0" stroke-width="0.7"/><path d="M21.6 15.8L32.4 11.7V14.4L21.6 20.3Z" fill="#f4f4f4" stroke="#a0a0a0" stroke-width="0.7"/><ellipse cx="10.8" cy="21.6" rx="5.2" ry="3.2" transform="rotate(-15 10.8 21.6)" fill="none" stroke="#e07878" stroke-width="2.4"/><ellipse cx="21.4" cy="28.6" rx="3.2" ry="5.4" fill="none" stroke="#e07878" stroke-width="2.4"/><path d="M16 20.5L19.5 22.5" stroke="#e07878" stroke-width="2.4"/><path d="M8.3 28V35M4.8 31.5H11.8" stroke="#555" stroke-width="1.2"/></g><g transform="translate(612 26)"><rect x="6.5" y="4.7" width="21" height="24.6" rx="1" fill="#f2f2f2" stroke="#d0d0d0" stroke-width="0.8"/><path d="M10 11H14.5M10 13.8H14.5M10 16.5H14.5M10 19.3H14.5M10 22H14.5" stroke="#dedede" stroke-width="1"/><path d="M14.5 10.5H35.5V29.5L30 35.5H14.5Z" fill="#efefef" stroke="#b4b4b4" stroke-width="0.9"/><path d="M30 35.5V29.5H35.5Z" fill="#c4c4c4"/><path d="M18.9 17.3H32.4M18.9 19.8H31.8M18.9 22.5H30.8M18.9 25.5H32.4" stroke="#c8c8c8" stroke-width="0.9"/><path d="M10.4 27V34M6.9 30.4H13.9" stroke="#555" stroke-width="1.2"/></g><g transform="translate(660 26)"><rect x="6.4" y="7.4" width="25" height="26.6" rx="1" fill="#c88c28" stroke="#8a5a10" stroke-width="0.8"/><rect x="8.8" y="8.2" width="20.2" height="24" fill="#f8f8f8"/><path d="M23.2 32.2L29 27V32.2Z" fill="#a0a0a0"/><path d="M12.2 14.4H25.9M12.2 17.3H25.2M12.2 19.8H24M12.2 22.5H25.9M12.2 25.5H20.8" stroke="#c0c0c0" stroke-width="0.9"/><rect x="12.6" y="6.4" width="12.6" height="5" rx="1.2" fill="#9a9a90" stroke="#5e5e58" stroke-width="0.8"/><rect x="15.4" y="4.4" width="7.2" height="2.4" rx="0.5" fill="#9a9a90" stroke="#5e5e58" stroke-width="0.8"/></g><g transform="translate(724.1 55.2) rotate(-41.83)"><path d="M0 0L3.5 -2.6H24.840454541605666V2.6H3.5Z" fill="#e02a2a" stroke="#6a3a10" stroke-width="0.6"/><path d="M0 0L3.5 -2.6V2.6Z" fill="#f2d0a8"/><path d="M0 0L1.6 -0.8V0.8Z" fill="#222"/><rect x="3.5" y="0.39" width="20.840454541605666" height="1.82" fill="#c01818"/><rect x="23.840454541605666" y="-2.6" width="3" height="5.2" rx="1" fill="#e83030"/><rect x="21.640454541605667" y="-2.3000000000000003" width="2" height="4.6000000000000005" fill="#c8c8c8"/></g><rect x="723" y="56" width="22" height="1.4" fill="#f00"/><rect x="765.7" y="35.7" width="28.6" height="21.4" fill="#000080" stroke="#1a1a3a" stroke-width="0.9"/><path d="M769.2 53.9L790.8 39.2V53.9Z" fill="none" stroke="#fff" stroke-width="1.3" stroke-dasharray="2.5 1.8"/><path d="M813.7 45.6A12.3 12.3 0 0 0 838.3 45.6A12.3 12.3 0 0 0 832 34.9" fill="none" stroke="#000" stroke-width="2.6"/><path d="M832 34.9A12.3 12.3 0 0 0 813.7 45.6A12.3 12.3 0 0 0 816.5 53.5" fill="none" stroke="#000" stroke-width="2.6" shape-rendering="crispEdges"/><path d="M812.1 59.9L840 32.1" stroke="#0000f0" stroke-width="1.4"/><rect x="870" y="33" width="2.2" height="2.2" fill="#111"/><rect x="870" y="41" width="2.2" height="2.2" fill="#111"/><rect x="870" y="49" width="2.2" height="2.2" fill="#111"/><rect x="870" y="57" width="2.2" height="2.2" fill="#111"/><rect x="878" y="33" width="2.2" height="2.2" fill="#111"/><rect x="878" y="41" width="2.2" height="2.2" fill="#111"/><rect x="878" y="49" width="2.2" height="2.2" fill="#111"/><rect x="878" y="57" width="2.2" height="2.2" fill="#111"/><rect x="886" y="33" width="2.2" height="2.2" fill="#111"/><rect x="886" y="41" width="2.2" height="2.2" fill="#111"/><rect x="886" y="49" width="2.2" height="2.2" fill="#111"/><rect x="886" y="57" width="2.2" height="2.2" fill="#111"/><rect x="894" y="33" width="2.2" height="2.2" fill="#111"/><rect x="894" y="41" width="2.2" height="2.2" fill="#111"/><rect x="894" y="49" width="2.2" height="2.2" fill="#111"/><rect x="894" y="57" width="2.2" height="2.2" fill="#111"/><g><ellipse cx="940" cy="55.2" rx="10" ry="2.6" fill="#000" opacity="0.07"/><path d="M945.6 51.1L952.6 57.7" stroke="#585858" stroke-width="4.6" stroke-linecap="round"/><path d="M946 50.7L952.2 56.5" stroke="#959595" stroke-width="1.2" stroke-linecap="round"/><circle cx="936" cy="41.7" r="11" fill="#ecece6" stroke="#b0b0a6" stroke-width="1"/><circle cx="936" cy="41.7" r="9.4" fill="url(#gblue)" stroke="#d0d0c8" stroke-width="0.5"/></g><path d="M930.3 40.2H934.2V36.3H937.8V40.2H942V43.8H937.8V47.4H934.2V43.8H930.3Z" fill="#fff" stroke="#3460a8" stroke-width="0.8"/><g><ellipse cx="986.2" cy="55.2" rx="10" ry="2.6" fill="#000" opacity="0.07"/><path d="M991.8000000000001 51.1L998.8000000000001 57.7" stroke="#585858" stroke-width="4.6" stroke-linecap="round"/><path d="M992.2 50.7L998.4000000000001 56.5" stroke="#959595" stroke-width="1.2" stroke-linecap="round"/><circle cx="982.2" cy="41.7" r="11" fill="#ecece6" stroke="#b0b0a6" stroke-width="1"/><circle cx="982.2" cy="41.7" r="9.4" fill="url(#gblue)" stroke="#d0d0c8" stroke-width="0.5"/></g><rect x="976.3" y="40.2" width="12" height="3.6" fill="#fff" stroke="#3460a8" stroke-width="0.8"/><g><ellipse cx="1032" cy="55.2" rx="10" ry="2.6" fill="#000" opacity="0.07"/><path d="M1037.6 51.1L1044.6 57.7" stroke="#585858" stroke-width="4.6" stroke-linecap="round"/><path d="M1038 50.7L1044.2 56.5" stroke="#959595" stroke-width="1.2" stroke-linecap="round"/><circle cx="1028" cy="41.7" r="11" fill="#ecece6" stroke="#b0b0a6" stroke-width="1"/><circle cx="1028" cy="41.7" r="9.4" fill="url(#gblue)" stroke="#d0d0c8" stroke-width="0.5"/></g><path d="M1022 39.5V35.7H1025.8M1030.2 35.7H1034V39.5M1034 43.9V47.7H1030.2M1025.8 47.7H1022V43.9" fill="none" stroke="#2a5aa8" stroke-width="3.2"/><path d="M1022 39.5V35.7H1025.8M1030.2 35.7H1034V39.5M1034 43.9V47.7H1030.2M1025.8 47.7H1022V43.9" fill="none" stroke="#fff" stroke-width="1.8"/><g><ellipse cx="1078.2" cy="55.2" rx="10" ry="2.6" fill="#000" opacity="0.07"/><path d="M1083.8 51.1L1090.8 57.7" stroke="#585858" stroke-width="4.6" stroke-linecap="round"/><path d="M1084.2 50.7L1090.4 56.5" stroke="#959595" stroke-width="1.2" stroke-linecap="round"/><circle cx="1074.2" cy="41.7" r="11" fill="#ecece6" stroke="#b0b0a6" stroke-width="1"/><circle cx="1074.2" cy="41.7" r="9.4" fill="#bcd0ea" stroke="#d0d0c8" stroke-width="0.5"/></g><path d="M1068.2 39.5V36H1071.7M1076.7 36H1080.2V39.5M1080.2 44V47.5H1076.7M1071.7 47.5H1068.2V44" fill="none" stroke="#e85858" stroke-width="2"/><g><ellipse cx="1124.1" cy="55.2" rx="10" ry="2.6" fill="#000" opacity="0.07"/><path d="M1129.6999999999998 51.1L1136.6999999999998 57.7" stroke="#585858" stroke-width="4.6" stroke-linecap="round"/><path d="M1130.1 50.7L1136.3 56.5" stroke="#959595" stroke-width="1.2" stroke-linecap="round"/><circle cx="1120.1" cy="41.7" r="11" fill="#ecece6" stroke="#b0b0a6" stroke-width="1"/><circle cx="1120.1" cy="41.7" r="9.4" fill="url(#gblue)" stroke="#d0d0c8" stroke-width="0.5"/></g><path d="M1113 41.7L1119.5 36.5V39.5H1127.5V44H1119.5V47Z" fill="#fff" stroke="#3460a8" stroke-width="0.6"/><rect x="1154.5" y="30.5" width="27" height="18" rx="1" fill="#fff" stroke="#5a8ad0" stroke-width="1"/><path d="M1175 51L1182 58.5" stroke="#5a5a5a" stroke-width="4" stroke-linecap="round"/><circle cx="1168.2" cy="45" r="9" fill="#e9e9e2" stroke="#a8a8a0" stroke-width="1"/><circle cx="1168.2" cy="45" r="7.2" fill="url(#gblue)"/><g><ellipse cx="1217" cy="56.6" rx="10" ry="2.6" fill="#000" opacity="0.07"/><path d="M1222.6 52.5L1229.6 59.1" stroke="#585858" stroke-width="4.6" stroke-linecap="round"/><path d="M1223 52.1L1229.2 57.900000000000006" stroke="#959595" stroke-width="1.2" stroke-linecap="round"/><circle cx="1213" cy="43.1" r="11" fill="#ecece6" stroke="#b0b0a6" stroke-width="1"/><circle cx="1213" cy="43.1" r="9.4" fill="url(#gblue)" stroke="#d0d0c8" stroke-width="0.5"/></g><path d="M1213 30L1216 33.5H1214.2V41.3H1222V39.5L1226 43.1L1222 46.7V44.9H1214.2V52.7H1216L1213 56.2L1210 52.7H1211.8V44.9H1204V46.7L1200 43.1L1204 39.5V41.3H1211.8V33.5H1210Z" fill="#fff" stroke="#3a70c0" stroke-width="0.8"/><path d="M31.3 79.2L40.6 88.2L37.6 88.5L39.8 95L37.9 95.8L35.5 89.5L31.3 92.8Z" fill="#fff" stroke="#444" stroke-width="0.8" stroke-linejoin="round"/><path d="M8.2 131.5H14.8M11.5 128.2V134.8M22 140.5H28.6M25.3 137.2V143.8M9.1 146.5H15.7M12.4 143.2V149.8" stroke="#1a1a1a" stroke-width="1.1"/><path d="M27.0 152L31.5 147.5V152Z" fill="#000"/><path d="M41.8 144.7L64.8 134.1" stroke="#1a1a1a" stroke-width="1.2"/><path d="M62.0 152L66.5 147.5V152Z" fill="#000"/><path d="M7.7 183.1A19.6 19.6 0 0 1 27.3 163.5" fill="none" stroke="#1a1a1a" stroke-width="1.2"/><path d="M27.0 187L31.5 182.5V187Z" fill="#000"/><circle cx="52.2" cy="173.3" r="9.8" fill="none" stroke="#1a1a1a" stroke-width="1.2"/><path d="M62.0 187L66.5 182.5V187Z" fill="#000"/><ellipse cx="17.9" cy="208.8" rx="15" ry="5.6" transform="rotate(-45 17.9 208.8)" fill="none" stroke="#1a1a1a" stroke-width="1.2"/><path d="M27.0 222L31.5 217.5V222Z" fill="#000"/><path d="M41.8 201.1C41 208 45 218.2 48.6 218.2C52 218.2 54 210 56 205C58 199 61 198 62.3 199.5C64 202 65 210.5 63.5 210.5C60 211 50 203 41.8 201.1Z" fill="none" stroke="#1a1a1a" stroke-width="1.2"/><path d="M62.0 222L66.5 217.5V222Z" fill="#000"/><path d="M13.2 239A4.6 4.6 0 0 0 12.8 248H27.7" fill="none" stroke="#1a1a1a" stroke-width="1.2"/><path d="M27.0 257L31.5 252.5V257Z" fill="#000"/><path d="M43.5 231.8H51.2L54.6 238.2L51.2 244.2H43.5L40.1 238.2Z" fill="none" stroke="#1a1a1a" stroke-width="1.1"/><path d="M55.5 245.5H65.7L60.6 236.5Z" fill="none" stroke="#1a1a1a" stroke-width="1.1"/><rect x="41.4" y="248.4" width="14.5" height="7.3" fill="none" stroke="#1a1a1a" stroke-width="1.1"/><path d="M62.0 257L66.5 252.5V257Z" fill="#000"/><path d="M8.1 278.5L13.7 272.1H28.2V286.2H8.1Z" fill="url(#hatch)" stroke="#1a1a1a" stroke-width="1.2"/><circle cx="20.1" cy="279.8" r="2.6" fill="#f4f4f4" stroke="#1a1a1a" stroke-width="1"/><path d="M27.0 292L31.5 287.5V292Z" fill="#000"/><text x="18" y="331.7" text-anchor="middle" font-family="Liberation Serif" font-size="28.5" fill="#000">A</text><path d="M43.4 314.2V329.8M61.4 314.2V329.8M44 316.6H60.8" stroke="#1a1a1a" stroke-width="1.2"/><path d="M43.8 316.6L47.5 314.8V318.4Z M61 316.6L57.3 314.8V318.4Z" fill="#1a1a1a"/><path d="M61.5 334.6L66 330.1V334.6Z" fill="#000"/><rect x="7.6" y="349.3" width="20.3" height="15" fill="#fff" stroke="#222" stroke-width="2"/><path d="M9.9 362.5L14.2 355.9L16.6 357.8L20.4 354L26 359.2V362.5Z" fill="#000"/><circle cx="24.4" cy="352.3" r="1.6" fill="#000"/><path d="M5.2 393.2V412.3H24.6Z" fill="none" stroke="#1a1a1a" stroke-width="1.3" stroke-linejoin="round"/><path d="M9.5 402.1V408.3H15.2Z" fill="none" stroke="#1a1a1a" stroke-width="1.1"/><g transform="translate(20.4 397.9) rotate(-139.40)"><path d="M0 0L3.5 -1.7H11.829316685939329V1.7H3.5Z" fill="#d82828" stroke="#8a3010" stroke-width="0.6"/><path d="M0 0L3.5 -1.7V1.7Z" fill="#f0c890"/><path d="M0 0L1.6 -0.8V0.8Z" fill="#222"/><rect x="10.829316685939329" y="-1.7" width="3" height="3.4" rx="1" fill="#e03030"/></g><path d="M23.2 405.5L26 387.5L28.9 405.5" fill="none" stroke="#1a1a1a" stroke-width="1.2"/><circle cx="26" cy="389.5" r="1.2" fill="none" stroke="#1a1a1a" stroke-width="0.9"/><path d="M26.5 412L31 407.5V412Z" fill="#000"/><rect x="41.5" y="395.8" width="23.2" height="7.6" rx="1" fill="#fff" stroke="#777" stroke-width="1"/><path d="M43.5 396.5V399.3M45.6 396.5V398.3M47.7 396.5V398.3M49.8 396.5V398.3M51.9 396.5V398.3M54.0 396.5V399.3M56.1 396.5V398.3M58.2 396.5V398.3M60.3 396.5V398.3M62.4 396.5V398.3" stroke="#555" stroke-width="0.7"/><rect x="7.6" y="425.3" width="17.2" height="12.4" fill="#f2ecd8" stroke="#a0a0a0" stroke-width="1"/><circle cx="21.8" cy="436.7" r="7.1" fill="#f2ecd8" fill-opacity="0.85" stroke="#a0a0a0" stroke-width="1"/><circle cx="7.8" cy="437.8" r="1.5" fill="#f07070"/><path d="M41.7 433.9L59.2 423.9" stroke="#ff2020" stroke-width="1.3"/><path d="M51.6 429.1L59.5 437L57.1 437.3L59 442L57 442.9L55 438.2L51.6 441Z" fill="#fff" stroke="#444" stroke-width="0.8" stroke-linejoin="round"/><path d="M61.5 446.6L66 442.1V446.6Z" fill="#000"/><path d="M19.9 467.1L28.4 472.7L16 478.8L7.5 474.5Z M7.5 474.5V483L16 488.4V478.8 M28.4 472.7V481.3L16 488.4" fill="none" stroke="#222" stroke-width="1.1" stroke-linejoin="round"/><path d="M26.5 491L31 486.5V491Z" fill="#000"/><circle cx="102" cy="118.7" r="5.2" fill="#f2f2f2" stroke="#2a3f8a" stroke-width="2.4"/><path d="M97.5 116A5.2 5.2 0 0 1 101 113.6" fill="none" stroke="#8a9ad0" stroke-width="2.4"/><path d="M98 120.5H101M103 116V118" stroke="#e09090" stroke-width="0.8"/><path d="M102.6 119.4L106.6 123.2" stroke="#f0a020" stroke-width="2"/><path d="M106.4 123L107.9 124.4" stroke="#e06060" stroke-width="2.2"/><g transform="translate(1174 142.5) scale(1.000 1.000)"><path d="M-7.3 1.0C-6.2 -2.8 -3.6 -5.5 0.2 -5.5C3.9 -5.5 6.2 -3.0 7.3 0.7C6.2 3.7 3.5 5.5 0 5.5C-3.6 5.5 -6 3.9 -7.3 1.0Z" fill="#000"/><path d="M-4.9 -2.0C-4.7 1.8 -2.7 3.6 -0.2 3.6C2.4 3.6 4.4 1.8 4.6 -1.8C3 -2.2 -3 -2.4 -4.9 -2.0Z" fill="#fff"/><circle cx="-0.2" cy="-0.6" r="2.5" fill="#000"/><circle cx="-0.8" cy="-0.9" r="0.8" fill="#fff" opacity="0.55"/></g><g transform="translate(1211 142.5) scale(1.000 1.000)"><path d="M-7.3 1.0C-6.2 -2.8 -3.6 -5.5 0.2 -5.5C3.9 -5.5 6.2 -3.0 7.3 0.7C6.2 3.7 3.5 5.5 0 5.5C-3.6 5.5 -6 3.9 -7.3 1.0Z" fill="#a8a8a8"/><path d="M-4.9 -2.0C-4.7 1.8 -2.7 3.6 -0.2 3.6C2.4 3.6 4.4 1.8 4.6 -1.8C3 -2.2 -3 -2.4 -4.9 -2.0Z" fill="#fff"/><circle cx="-0.2" cy="-0.6" r="2.5" fill="#a8a8a8"/><circle cx="-0.8" cy="-0.9" r="0.8" fill="#fff" opacity="0.55"/></g><path d="M1249 137.5V148.3M1243.6 142.9H1254.4" stroke="#5a1010" stroke-width="3.3"/><path d="M1249 137.9V147.9M1244 142.9H1254" stroke="#f00" stroke-width="2.3"/><rect x="1280" y="141.5" width="12" height="3" fill="#f08080"/><text x="1324" y="149" text-anchor="middle" font-family="Liberation Sans" font-size="13" fill="#8a8a8a">a b</text><path d="M1323.6 136.5V149.5" stroke="#8a8a8a" stroke-width="0.9"/><g transform="translate(1354.2 149.7) rotate(-44.79)"><path d="M0 0L3.5 -1.7H17.021303845951238V1.7H3.5Z" fill="#e0a850" stroke="#8a5a18" stroke-width="0.6"/><path d="M0 0L3.5 -1.7V1.7Z" fill="#f0d8a8"/><path d="M0 0L1.6 -0.8V0.8Z" fill="#222"/><rect x="16.021303845951238" y="-1.7" width="3" height="3.4" rx="1" fill="#e02828"/></g><rect x="1393.5" y="136.3" width="11.5" height="12.4" fill="#eaeaf0" stroke="#d8d8e0" stroke-width="0.6"/><path d="M1396 139C1400 137.5 1402 140 1400.5 143.5" fill="none" stroke="#8aa4ec" stroke-width="2"/><path d="M1397 143.5H1404.5L1400.7 148.3Z" fill="#8aa4ec"/><rect x="1431.7" y="138.3" width="9.4" height="9.4" rx="1" fill="#f07050" stroke="#d02020" stroke-width="1"/><path d="M1433.9 140.5L1438.9 145.5M1438.9 140.5L1433.9 145.5" stroke="#fff" stroke-width="1.6"/><g transform="translate(1169 166.5) scale(1.000 1.000)"><path d="M-7.3 1.0C-6.2 -2.8 -3.6 -5.5 0.2 -5.5C3.9 -5.5 6.2 -3.0 7.3 0.7C6.2 3.7 3.5 5.5 0 5.5C-3.6 5.5 -6 3.9 -7.3 1.0Z" fill="#393e4a"/><path d="M-4.9 -2.0C-4.7 1.8 -2.7 3.6 -0.2 3.6C2.4 3.6 4.4 1.8 4.6 -1.8C3 -2.2 -3 -2.4 -4.9 -2.0Z" fill="#0a4fd6"/><circle cx="-0.2" cy="-0.6" r="2.5" fill="#393e4a"/><circle cx="-0.8" cy="-0.9" r="0.8" fill="#0a4fd6" opacity="0.55"/></g><g transform="translate(1185 173) rotate(-41.86)"><path d="M0 0L3.5 -1.6H14.783622970026457V1.6H3.5Z" fill="#e0b070" stroke="#a07030" stroke-width="0.6"/><path d="M0 0L3.5 -1.6V1.6Z" fill="#f0d8a8"/><path d="M0 0L1.6 -0.8V0.8Z" fill="#222"/><rect x="13.783622970026457" y="-1.6" width="3" height="3.2" rx="1" fill="#e05050"/></g><g transform="translate(1169 186.5) scale(1.000 1.000)"><path d="M-7.3 1.0C-6.2 -2.8 -3.6 -5.5 0.2 -5.5C3.9 -5.5 6.2 -3.0 7.3 0.7C6.2 3.7 3.5 5.5 0 5.5C-3.6 5.5 -6 3.9 -7.3 1.0Z" fill="#000"/><path d="M-4.9 -2.0C-4.7 1.8 -2.7 3.6 -0.2 3.6C2.4 3.6 4.4 1.8 4.6 -1.8C3 -2.2 -3 -2.4 -4.9 -2.0Z" fill="#fff"/><circle cx="-0.2" cy="-0.6" r="2.5" fill="#000"/><circle cx="-0.8" cy="-0.9" r="0.8" fill="#fff" opacity="0.55"/></g><g transform="translate(1169 206.5) scale(1.000 1.000)"><path d="M-7.3 1.0C-6.2 -2.8 -3.6 -5.5 0.2 -5.5C3.9 -5.5 6.2 -3.0 7.3 0.7C6.2 3.7 3.5 5.5 0 5.5C-3.6 5.5 -6 3.9 -7.3 1.0Z" fill="#000"/><path d="M-4.9 -2.0C-4.7 1.8 -2.7 3.6 -0.2 3.6C2.4 3.6 4.4 1.8 4.6 -1.8C3 -2.2 -3 -2.4 -4.9 -2.0Z" fill="#fff"/><circle cx="-0.2" cy="-0.6" r="2.5" fill="#000"/><circle cx="-0.8" cy="-0.9" r="0.8" fill="#fff" opacity="0.55"/></g><g transform="translate(1184.5 343.5) scale(1.000 1.000)"><path d="M-7.3 1.0C-6.2 -2.8 -3.6 -5.5 0.2 -5.5C3.9 -5.5 6.2 -3.0 7.3 0.7C6.2 3.7 3.5 5.5 0 5.5C-3.6 5.5 -6 3.9 -7.3 1.0Z" fill="#000"/><path d="M-4.9 -2.0C-4.7 1.8 -2.7 3.6 -0.2 3.6C2.4 3.6 4.4 1.8 4.6 -1.8C3 -2.2 -3 -2.4 -4.9 -2.0Z" fill="#fff"/><circle cx="-0.2" cy="-0.6" r="2.5" fill="#000"/><circle cx="-0.8" cy="-0.9" r="0.8" fill="#fff" opacity="0.55"/></g><g transform="translate(1244.5 343.5) scale(1.000 1.000)"><path d="M-7.3 1.0C-6.2 -2.8 -3.6 -5.5 0.2 -5.5C3.9 -5.5 6.2 -3.0 7.3 0.7C6.2 3.7 3.5 5.5 0 5.5C-3.6 5.5 -6 3.9 -7.3 1.0Z" fill="#a8a8a8"/><path d="M-4.9 -2.0C-4.7 1.8 -2.7 3.6 -0.2 3.6C2.4 3.6 4.4 1.8 4.6 -1.8C3 -2.2 -3 -2.4 -4.9 -2.0Z" fill="#fff"/><circle cx="-0.2" cy="-0.6" r="2.5" fill="#a8a8a8"/><circle cx="-0.8" cy="-0.9" r="0.8" fill="#fff" opacity="0.55"/></g><path d="M1305 338.3V349.5M1299.4 343.9H1310.6" stroke="#5a1010" stroke-width="3.3"/><path d="M1305 338.7V349.1M1299.8 343.9H1310.2" stroke="#f00" stroke-width="2.3"/><rect x="1359" y="342" width="12" height="3" fill="#e81010"/><g transform="translate(1417.5 350.5) rotate(-45.00)"><path d="M0 0L3.5 -1.7H17.091883092036785V1.7H3.5Z" fill="#e0a850" stroke="#8a5a18" stroke-width="0.6"/><path d="M0 0L3.5 -1.7V1.7Z" fill="#f0d8a8"/><path d="M0 0L1.6 -0.8V0.8Z" fill="#222"/><rect x="16.091883092036785" y="-1.7" width="3" height="3.4" rx="1" fill="#e02828"/></g><g transform="translate(1422.8 367.6) scale(1.000 1.000)"><path d="M-7.3 1.0C-6.2 -2.8 -3.6 -5.5 0.2 -5.5C3.9 -5.5 6.2 -3.0 7.3 0.7C6.2 3.7 3.5 5.5 0 5.5C-3.6 5.5 -6 3.9 -7.3 1.0Z" fill="#000"/><path d="M-4.9 -2.0C-4.7 1.8 -2.7 3.6 -0.2 3.6C2.4 3.6 4.4 1.8 4.6 -1.8C3 -2.2 -3 -2.4 -4.9 -2.0Z" fill="#fff"/><circle cx="-0.2" cy="-0.6" r="2.5" fill="#000"/><circle cx="-0.8" cy="-0.9" r="0.8" fill="#fff" opacity="0.55"/></g><path d="M1441.7 367.1V363.90000000000003A3.5 3.5 0 0 1 1448.7 363.90000000000003V367.1" fill="none" stroke="#b9b9b9" stroke-width="1.6"/><rect x="1440.2" y="367.1" width="10" height="7.5" rx="0.8" fill="#b9b9b9"/><g transform="translate(1422.8 387.6) scale(1.000 1.000)"><path d="M-7.3 1.0C-6.2 -2.8 -3.6 -5.5 0.2 -5.5C3.9 -5.5 6.2 -3.0 7.3 0.7C6.2 3.7 3.5 5.5 0 5.5C-3.6 5.5 -6 3.9 -7.3 1.0Z" fill="#000"/><path d="M-4.9 -2.0C-4.7 1.8 -2.7 3.6 -0.2 3.6C2.4 3.6 4.4 1.8 4.6 -1.8C3 -2.2 -3 -2.4 -4.9 -2.0Z" fill="#fff"/><circle cx="-0.2" cy="-0.6" r="2.5" fill="#000"/><circle cx="-0.8" cy="-0.9" r="0.8" fill="#fff" opacity="0.55"/></g><path d="M1441.7 387.1V383.90000000000003A3.5 3.5 0 0 1 1448.7 383.90000000000003V387.1" fill="none" stroke="#b9b9b9" stroke-width="1.6"/><rect x="1440.2" y="387.1" width="10" height="7.5" rx="0.8" fill="#b9b9b9"/><g transform="translate(1422.8 407.6) scale(1.000 1.000)"><path d="M-7.3 1.0C-6.2 -2.8 -3.6 -5.5 0.2 -5.5C3.9 -5.5 6.2 -3.0 7.3 0.7C6.2 3.7 3.5 5.5 0 5.5C-3.6 5.5 -6 3.9 -7.3 1.0Z" fill="#000"/><path d="M-4.9 -2.0C-4.7 1.8 -2.7 3.6 -0.2 3.6C2.4 3.6 4.4 1.8 4.6 -1.8C3 -2.2 -3 -2.4 -4.9 -2.0Z" fill="#fff"/><circle cx="-0.2" cy="-0.6" r="2.5" fill="#000"/><circle cx="-0.8" cy="-0.9" r="0.8" fill="#fff" opacity="0.55"/></g><path d="M1441.7 407.1V403.90000000000003A3.5 3.5 0 0 1 1448.7 403.90000000000003V407.1" fill="none" stroke="#b9b9b9" stroke-width="1.6"/><rect x="1440.2" y="407.1" width="10" height="7.5" rx="0.8" fill="#b9b9b9"/><g transform="translate(1422.8 427.6) scale(1.000 1.000)"><path d="M-7.3 1.0C-6.2 -2.8 -3.6 -5.5 0.2 -5.5C3.9 -5.5 6.2 -3.0 7.3 0.7C6.2 3.7 3.5 5.5 0 5.5C-3.6 5.5 -6 3.9 -7.3 1.0Z" fill="#393e4a"/><path d="M-4.9 -2.0C-4.7 1.8 -2.7 3.6 -0.2 3.6C2.4 3.6 4.4 1.8 4.6 -1.8C3 -2.2 -3 -2.4 -4.9 -2.0Z" fill="#0a4fd6"/><circle cx="-0.2" cy="-0.6" r="2.5" fill="#393e4a"/><circle cx="-0.8" cy="-0.9" r="0.8" fill="#0a4fd6" opacity="0.55"/></g><path d="M1441.7 427.1V423.90000000000003A3.5 3.5 0 0 1 1448.7 423.90000000000003V427.1" fill="none" stroke="#b8c4dc" stroke-width="1.6"/><rect x="1440.2" y="427.1" width="10" height="7.5" rx="0.8" fill="#b8c4dc"/><g transform="translate(1394.9 434) rotate(-44.29)"><path d="M0 0L3.5 -1.5H15.18400418994359V1.5H3.5Z" fill="#e0b070" stroke="#a07030" stroke-width="0.6"/><path d="M0 0L3.5 -1.5V1.5Z" fill="#f0d8a8"/><path d="M0 0L1.6 -0.8V0.8Z" fill="#222"/><rect x="14.18400418994359" y="-1.5" width="3" height="3" rx="1" fill="#e05050"/></g><path d="M1472 149L1478 146V137L1472 140Z" fill="#999" stroke="#444" stroke-width="0.6"/><path d="M1474 150L1484 145V135L1474 140Z" fill="#eee" stroke="#555" stroke-width="0.7"/><path d="M1477 146L1481 138L1483 144Z" fill="none" stroke="#e04040" stroke-width="0.8"/><rect x="1470.5" y="185" width="10" height="7" fill="#f2e8c0" stroke="#888" stroke-width="0.8"/><circle cx="1479" cy="191.5" r="4.5" fill="#f2e8c0" fill-opacity="0.8" stroke="#888" stroke-width="0.8"/><rect x="1468.5" y="232" width="19" height="11" rx="2" fill="#f4f4f4" stroke="#b8c8e0" stroke-width="0.8"/><rect x="1466" y="285" width="4" height="3" rx="0.8" fill="#000"/><rect x="1473.5" y="285" width="14" height="3" fill="#fff" stroke="#444" stroke-width="0.7"/><rect x="1466" y="291" width="4" height="3" rx="0.8" fill="#000"/><rect x="1473.5" y="291" width="14" height="3" fill="#fff" stroke="#444" stroke-width="0.7"/><rect x="1466" y="297" width="4" height="3" rx="0.8" fill="#000"/><rect x="1473.5" y="297" width="14" height="3" fill="#fff" stroke="#444" stroke-width="0.7"/><path d="M1470 333.5Q1477 331 1484 333.5L1479 340V346L1476.5 345V340Z" fill="#aaa" stroke="#555" stroke-width="0.7"/><ellipse cx="1477" cy="333.5" rx="7" ry="1.3" fill="#666"/><path d="M1470 376V391L1476 386V381Z" fill="#fff" stroke="#333" stroke-width="0.8"/><rect x="1476" y="379" width="10" height="8" fill="#bbb" stroke="#555" stroke-width="0.6"/><path d="M1467 383H1490" stroke="#e07070" stroke-width="0.6" stroke-dasharray="1 1"/><path d="M1467 434H1482M1467 438H1481M1467 442H1483M1467 446H1484" stroke="#666" stroke-width="0.6"/><path d="M1466 449H1490" stroke="#333" stroke-width="0.5"/><text x="1478" y="452" font-size="3.5" font-family="Liberation Sans" fill="#000" text-anchor="middle">c_command</text><rect x="1470" y="482" width="15" height="16" rx="1" fill="#c88c28"/><rect x="1471.5" y="483.5" width="12" height="13" fill="#f8f8f8"/><rect x="1474" y="481" width="7" height="3" fill="#888"/><rect x="717.5" y="806.5" width="17" height="29" rx="8.5" fill="#fff" stroke="#555" stroke-width="1"/><path d="M717.5 819.8Q726 817.2 734.5 819.8" fill="none" stroke="#444" stroke-width="1.4"/><rect x="724.5" y="808.8" width="3.2" height="6.6" rx="1.5" fill="#fff" stroke="#444" stroke-width="1"/><path d="M726 806.5V808.8M726 815.4V818.5" stroke="#444" stroke-width="1"/><filter id="blr" x="-20%" y="-20%" width="140%" height="140%"><feGaussianBlur stdDeviation="0.9"/></filter><circle cx="1186.5" cy="164.8" r="36.2" fill="none" stroke="#9fb5ca" stroke-width="6.2" opacity="0.6" filter="url(#blr)"/><circle cx="1186.5" cy="164.8" r="36.2" fill="none" stroke="#c8d6e2" stroke-width="1.2" opacity="0.5"/><circle cx="1186.5" cy="164.8" r="32.5" fill="none" stroke="#fff" stroke-width="2.2" opacity="0.35" filter="url(#blr)"/><path d="M1187.4 164.8V186.7L1192.5 181.6L1197.8 192.3L1201 190.7L1196.4 180.6H1202.8Z" fill="#fff" stroke="#000" stroke-width="1.1" stroke-linejoin="round"/></svg></body></html>
